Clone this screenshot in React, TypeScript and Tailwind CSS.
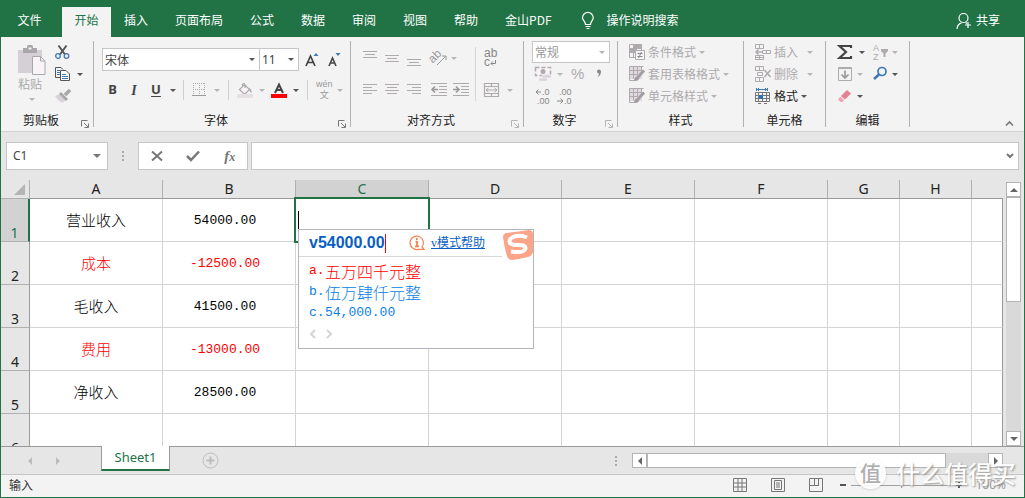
import React, { type ReactNode } from 'react';
import { clsx } from 'clsx';

const menuTabs = ['插入', '页面布局', '公式', '数据', '审阅', '视图', '帮助', '金山PDF'];

const columns = ['A', 'B', 'C', 'D', 'E', 'F', 'G', 'H', ''];

const rows = [
  { label: '营业收入', value: '54000.00', negative: false },
  { label: '成本', value: '-12500.00', negative: true },
  { label: '毛收入', value: '41500.00', negative: false },
  { label: '费用', value: '-13000.00', negative: true },
  { label: '净收入', value: '28500.00', negative: false },
  { label: '', value: '', negative: false },
];

const candidates = [
  { key: 'a.', text: '五万四千元整', numeric: false },
  { key: 'b.', text: '伍万肆仟元整', numeric: false },
  { key: 'c.', text: '54,000.00', numeric: true },
];

function Icon({ w = 16, h = 16, className, children }: { w?: number; h?: number; className?: string; children: ReactNode }) {
  return (
    <svg
      width={w}
      height={h}
      viewBox={`0 0 ${w} ${h}`}
      fill="none"
      stroke="currentColor"
      aria-hidden="true"
      className={clsx('block shrink-0 overflow-visible', className)}
    >
      {children}
    </svg>
  );
}

function Caret({ dim, className }: { dim?: boolean; className?: string }) {
  return (
    <Icon w={6} h={3} className={clsx(dim ? 'text-[#b5b5b5]' : 'text-[#555]', className)}>
      <path d="M0 0h6L3 3z" fill="currentColor" stroke="none" />
    </Icon>
  );
}

function Glyphs({ x, y, size = 9, children }: { x: number; y: number; size?: number; children: string }) {
  return (
    <text x={x} y={y} fill="currentColor" stroke="none" fontSize={size} fontFamily="Liberation Sans">
      {children}
    </text>
  );
}

function Tool({ label, dim, className, children }: { label: string; dim?: boolean; className?: string; children: ReactNode }) {
  return (
    <button
      type="button"
      aria-label={label}
      className={clsx('flex h-[22px] shrink-0 items-center', dim ? 'text-[#aeaaae]' : 'text-[#444]', className)}
    >
      {children}
    </button>
  );
}

function Group({ title, width, className, launcher, launcherDim, children }: {
  title: string;
  width: string;
  className?: string;
  launcher?: boolean;
  launcherDim?: boolean;
  children: ReactNode;
}) {
  return (
    <section className={clsx('flex h-[86px] shrink-0 flex-col border-r border-[#b1b1b1]', width)}>
      <div className={clsx('h-[72px]', className)}>{children}</div>
      <div className="flex h-[14px] items-center leading-[14px]">
        <span className="flex-1 text-center text-[#222]">{title}</span>
        {launcher && (
          <button
            type="button"
            aria-label={`${title}设置`}
            className={clsx('mt-2 mr-1', launcherDim ? 'text-[#b5b5b5]' : 'text-[#777]')}
          >
            <Icon w={8} h={8}>
              <path d="M.5 6.5V.5H6.5M3 3l4 4M7.5 3.5v4h-4" />
            </Icon>
          </button>
        )}
      </div>
    </section>
  );
}

function VLine({ className }: { className: string }) {
  return <span className={clsx('w-px shrink-0 bg-[#cfcfcf]', className)} />;
}

function Lines({ d }: { d: string }) {
  return (
    <Icon w={14} h={18}>
      <path d={d} />
    </Icon>
  );
}

function MenuBar() {
  return (
    <nav className="flex h-[37px] items-end bg-[#217346] text-white">
      <button type="button" className="h-[30px] w-[61px] pr-1 pb-1">文件</button>
      <button type="button" className="h-[30px] w-[49px] bg-[#f3f3f3] pb-1 text-[#217346]">开始</button>
      <div className="flex h-[30px] gap-px pb-1">
        {menuTabs.map((tab) => (
          <button key={tab} type="button" className="px-[13px] whitespace-nowrap">{tab}</button>
        ))}
      </div>
      <button type="button" className="ml-4 flex h-[30px] items-center gap-3 pb-1">
        <Icon w={14} h={18}>
          <path d="M4.500 13.500C4.500 10.500 1.500 9.500 1.500 6.800A5.300 5.300 0 0 1 12.200 6.800C12.200 9.500 9.500 10.500 9.500 13.500zM4.500 15.500h5M5.500 17.500h3" strokeWidth="1.200" />
        </Icon>
        操作说明搜索
      </button>
      <button type="button" className="mr-6 ml-auto flex h-[30px] items-center gap-1 pb-1">
        <Icon w={16} h={18}>
          <circle cx="7.500" cy="7" r="4.500" strokeWidth="1.200" />
          <path d="M1 18c.3-4 2-5.500 4.500-6.200M9.500 11.500l1.500 1M12 11v6M9 14h6" strokeWidth="1.200" />
        </Icon>
        共享
      </button>
    </nav>
  );
}

function ClipboardGroup() {
  return (
    <Group title="剪贴板" width="w-[93px]" launcher>
      <div className="flex">
        <button type="button" className="ml-4 flex w-[30px] flex-col items-center pt-1 text-[#aaa]">
          <Icon w={28} h={30}>
            <path d="M0 5h24v23H0z" fill="#d5d0d5" stroke="none" />
            <path d="M5 8V3h4V1.500Q9 0 10.500 0h3Q15 0 15 1.500V3h4v5z" fill="#aaa7aa" stroke="none" />
            <path d="M10.500 3.500h3" stroke="#f3f3f3" strokeWidth="2" />
            <path d="M14.500 11.500h8l4.500 4.500v13.500H14.500z" fill="#f8f4f8" stroke="#aaa7aa" />
            <path d="M22.500 11.500V16H27" stroke="#aaa7aa" />
          </Icon>
          <span className="mt-px pr-1 leading-4">粘贴</span>
          <Caret dim className="mt-1.5" />
        </button>
        <div className="ml-2">
          <Tool label="剪切">
            <Icon>
              <path d="M3.500 1.500l6.500 9M11.500 1.500l-6.500 9" strokeWidth="2" stroke="#555" />
              <circle cx="3" cy="12" r="2.300" stroke="#3e79b4" strokeWidth="1.300" />
              <circle cx="11.500" cy="12" r="2.300" stroke="#3e79b4" strokeWidth="1.300" />
            </Icon>
          </Tool>
          <Tool label="复制" className="gap-1.5">
            <Icon>
              <path d="M6 11.500H.5V1.500h5.500l2 2" stroke="#555" />
              <path d="M5.500 4.500h5.500l3.500 3.500v6.500H5.500z" fill="#fff" stroke="#555" />
              <path d="M2 4.500h3M2 6.500h3M2 8.500h3M7 8.500h4M7 10.500h6M7 12.500h6" stroke="#3e79b4" />
            </Icon>
            <Caret />
          </Tool>
          <Tool label="格式刷" dim>
            <Icon>
              <path d="M0 8l5-2 6 6-4 3q-4-2-7-7z" fill="#d8d3d8" stroke="none" />
              <path d="M6 4l7 7-2 2-7-7z" fill="#aaa7aa" stroke="none" />
              <path d="M10 7l5-5" strokeWidth="3.500" stroke="#aaa7aa" />
            </Icon>
          </Tool>
        </div>
      </div>
    </Group>
  );
}

function FontGroup() {
  return (
    <Group title="字体" width="w-[257px]" className="pl-2" launcher>
      <div className="flex items-center pt-[7px]">
        <label className="flex h-[23px] w-[158px] items-center border border-[#c6c6c6] bg-white pr-1">
          <select aria-label="字体" defaultValue="宋体" className="min-w-0 flex-1 appearance-none pl-0.5 text-[#444] outline-none">
            <option>宋体</option>
          </select>
          <Caret />
        </label>
        <label className="-ml-px flex h-[23px] w-10 items-center border border-[#c6c6c6] bg-white pr-1">
          <select aria-label="字号" defaultValue="11" className="min-w-0 flex-1 appearance-none pl-0.5 font-['Noto_Sans'] text-[12px] text-[#444] outline-none">
            <option>11</option>
          </select>
          <Caret />
        </label>
        <Tool label="增大字号" className="ml-1.5 w-[23px]">
          <Icon w={14}>
            <path d="M1 14L5.500 4L10 14M2.500 10.500h6" strokeWidth="1.700" />
            <path d="M8.500 4l2.500-3L13.500 4z" fill="#3e79b4" stroke="none" />
          </Icon>
        </Tool>
        <Tool label="减小字号">
          <Icon w={14}>
            <path d="M1 14L4.500 6L8 14M2 11h5" strokeWidth="1.600" />
            <path d="M7.500 1h5L10 4z" fill="#3e79b4" stroke="none" />
          </Icon>
        </Tool>
      </div>
      <div className="flex items-center pt-2 font-['Noto_Sans']">
        <Tool label="加粗" className="w-[21px] justify-center text-[13px] font-bold">B</Tool>
        <Tool label="倾斜" className="w-[22px] justify-center font-['Liberation_Serif'] text-[14px] font-bold italic">I</Tool>
        <Tool label="下划线" className="w-[22px] justify-center text-[13px] font-bold underline underline-offset-2">U</Tool>
        <Tool label="下划线样式" className="w-3 justify-center"><Caret /></Tool>
        <VLine className="ml-1 h-[20px]" />
        <Tool label="边框" dim className="ml-2 gap-2">
          <Icon w={14}>
            <path d="M1.500 1v11M7.500 1v11M12.500 1v11M1 1.500h12M1 7.500h12" strokeDasharray="1 1" />
            <path d="M0 13.500h14" stroke="#999" />
          </Icon>
          <Caret dim />
        </Tool>
        <VLine className="mx-2 h-[20px]" />
        <Tool label="填充颜色" dim className="gap-1.5">
          <Icon>
            <path d="M2.500 7.500l5-5 5 5-5 5zM5.500 5V2.500Q6.500.5 8 2.500V6" fill="#f7f3f7" strokeWidth="1.200" />
            <path d="M12 6q3 1 2.500 5q-2-.5-2.500-5z" fill="currentColor" stroke="none" />
            <path d="M0 12h16v4H0z" fill="#e6dfe4" stroke="none" />
          </Icon>
          <Caret dim />
        </Tool>
        <Tool label="字体颜色" className="ml-1.5 gap-1.5">
          <Icon>
            <path d="M4 11L8 2.500L12 11M5.500 8h5" strokeWidth="2" />
            <path d="M0 12h16v4H0z" fill="#f00" stroke="none" />
          </Icon>
          <Caret />
        </Tool>
        <VLine className="mx-2 h-[20px]" />
        <Tool label="拼音指南" dim className="gap-1">
          <span className="flex flex-col items-center text-[#999]">
            <span className="font-['Liberation_Sans'] text-[9px] leading-[10px]">wén</span>
            <span className="font-['Noto_Sans_CJK_SC'] text-[9px] leading-[12px]">文</span>
          </span>
          <Caret dim />
        </Tool>
      </div>
    </Group>
  );
}

function AlignGroup() {
  return (
    <Group title="对齐方式" width="w-[173px]" className="pl-3" launcher launcherDim>
      <div className="flex pt-1.5">
        <div className="w-[113px] border-r border-[#d6d6d6]">
          <div className="flex h-[22px] gap-2">
            <Tool label="顶端对齐" dim><Lines d="M0 2.500h14M2 5.500h10M0 8.500h14" /></Tool>
            <Tool label="垂直居中" dim><Lines d="M0 6.500h14M2 9.500h10M0 12.500h14" /></Tool>
            <Tool label="底端对齐" dim><Lines d="M0 10.500h14M2 13.500h10M0 16.500h14" /></Tool>
            <Tool label="方向" dim className="ml-0.5 gap-1">
              <Icon className="text-[#999]">
                <g transform="rotate(-45 6 8)"><Glyphs x={-1} y={9} size={12}>ab</Glyphs></g>
                <path d="M6 15l9-9M11 6h4v4" />
              </Icon>
              <Caret dim />
            </Tool>
          </div>
          <div className="mt-2.5 flex h-[22px] gap-2">
            <Tool label="左对齐" dim><Lines d="M0 3.500h14M0 6.500h9M0 9.500h14M0 12.500h9" /></Tool>
            <Tool label="居中" dim><Lines d="M0 3.500h14M2 6.500h10M0 9.500h14M2 12.500h10" /></Tool>
            <Tool label="右对齐" dim><Lines d="M0 3.500h14M5 6.500h9M0 9.500h14M5 12.500h9" /></Tool>
            <Tool label="减少缩进量" dim className="ml-0.5">
              <Icon>
                <path d="M0 1.500h16M8 4.500h8M8 7.500h8M8 10.500h8M0 13.500h16" />
                <path d="M7 7.500H1M4 4.500l-3 3 3 3" strokeWidth="1.600" stroke="#999" />
              </Icon>
            </Tool>
            <Tool label="增加缩进量" dim className="-ml-0.5">
              <Icon>
                <path d="M0 1.500h16M8 4.500h8M8 7.500h8M8 10.500h8M0 13.500h16" />
                <path d="M0 7.500h6M3 4.500l3 3-3 3" strokeWidth="1.600" stroke="#999" />
              </Icon>
            </Tool>
          </div>
        </div>
        <div className="ml-2">
          <Tool label="自动换行" dim>
            <span className="flex flex-col font-['Liberation_Sans'] text-[12px] text-[#888]">
              <span className="leading-[9px]">ab</span>
              <span className="flex leading-[9px]">
                c
                <Icon w={7} h={9}><path d="M5.500 2v3.500H1M3 3.500L1 5.500l2 2" /></Icon>
              </span>
            </span>
          </Tool>
          <Tool label="合并后居中" dim className="mt-2.5 gap-2">
            <Icon w={15}>
              <path d="M.5 1.500h14v13H.5zM.5 4.500h14M.5 11.500h14M7.500 1.500v3M7.500 11.500v3" strokeWidth="1.200" />
              <path d="M2 8h11M4.500 6L2 8l2.500 2M10.500 6L13 8l-2.500 2" />
            </Icon>
            <Caret dim />
          </Tool>
        </div>
      </div>
    </Group>
  );
}

function NumberGroup() {
  return (
    <Group title="数字" width="w-[94px]" className="pl-2" launcher launcherDim>
      <label className="flex h-[22px] w-[78px] items-center border border-[#c6c6c6] bg-white pr-1">
        <select aria-label="数字格式" defaultValue="常规" className="min-w-0 flex-1 appearance-none pl-0.5 text-[#999] outline-none">
          <option>常规</option>
        </select>
        <Caret dim />
      </label>
      <div className="flex pl-[3px]">
        <Tool label="会计数字格式" dim className="gap-1.5">
          <Icon>
            <path d="M.5 1.500h15v8H.5z" fill="#f7f3f7" strokeWidth="1.500" strokeDasharray="4 2" />
            <circle cx="8" cy="5.500" r="2.500" fill="currentColor" stroke="none" />
            <path d="M7 9h9v3H7zM4 12h8v3H4z" fill="#d8d3d8" stroke="#f3f3f3" strokeWidth=".5" />
          </Icon>
          <Caret dim />
        </Tool>
        <Tool label="百分比样式" dim className="ml-2 font-['Liberation_Sans'] text-[15px] text-[#888]">%</Tool>
        <Tool label="千位分隔样式" dim className="ml-3">
          <Icon w={6} h={10}>
            <path d="M1 2.500q0-2 2-2t2 2q0 4-3.500 5.500q1.500-2 1.500-3.500-2 0-2-2z" fill="#888" stroke="none" />
          </Icon>
        </Tool>
      </div>
      <div className="flex gap-1.5 pl-[3px]">
        <Tool label="增加小数位数" dim>
          <Icon h={20} className="text-[#888]">
            <Glyphs x={7} y={9}>.0</Glyphs>
            <Glyphs x={2} y={18}>.00</Glyphs>
            <path d="M1 6h5M3.500 3.500L1 6l2.500 2.500" />
          </Icon>
        </Tool>
        <Tool label="减少小数位数" dim>
          <Icon h={20} className="text-[#888]">
            <Glyphs x={2} y={9}>.00</Glyphs>
            <Glyphs x={7} y={18}>.0</Glyphs>
            <path d="M0 15h6M3.500 12.500L6 15l-2.500 2.500" />
          </Icon>
        </Tool>
      </div>
    </Group>
  );
}

function TableBrushIcon() {
  return (
    <Icon>
      <path d="M1 1h12v12H1z" fill="#e0dae0" stroke="none" />
      <path d="M.5.5h14M.5.5v14H6M.5 4.500h14M.5 8.500h8M4.500.5v12M8.500.5v8M12.500.5v4" />
      <path d="M15 4.500L9 11" strokeWidth="3" stroke="#a29ea2" />
      <path d="M5 15q0-4 3.500-5l2 2q-1 3.500-5.500 3z" fill="#a29ea2" stroke="none" />
    </Icon>
  );
}

function StyleGroup() {
  return (
    <Group title="样式" width="w-[126px]" className="pl-[11px]">
      <Tool label="条件格式" dim className="gap-[3px]">
        <Icon>
          <path d="M.5.5h12v13H.5zM.5 4.500h12M.5 8.500h6M4.500.5v13" />
          <path d="M5 0h8v4H5zM1 5h7v3H1z" fill="currentColor" stroke="none" />
          <path d="M6.500 6.500h9v9h-9z" fill="#f8f5f8" />
          <path d="M8.500 9.500h5M8.500 12.500h5M12.500 8l-3 6" stroke="#888" />
        </Icon>
        <span>条件格式</span>
        <Caret dim />
      </Tool>
      <Tool label="套用表格格式" dim className="gap-[3px]"><TableBrushIcon /><span>套用表格格式</span><Caret dim /></Tool>
      <Tool label="单元格样式" dim className="gap-[3px]"><TableBrushIcon /><span>单元格样式</span><Caret dim /></Tool>
    </Group>
  );
}

function CellsGroup() {
  return (
    <Group title="单元格" width="w-[82px]" className="pl-[11px]">
      <Tool label="插入" dim className="gap-[3px]">
        <Icon>
          <path d="M.5 .5h8v4h-8zM4.500.5v4M.5 11.500h8v4h-8zM4.500 11.500v4M.5 13.500h8M7.500 6.500h8v3h-8zM11.500 6.500v3" />
          <path d="M7 8H1M3.500 5.500L1 8l2.500 2.500" strokeWidth="1.500" />
        </Icon>
        <span>插入</span>
        <Caret dim className="ml-1.5" />
      </Tool>
      <Tool label="删除" dim className="gap-[3px]">
        <Icon>
          <path d="M.5 .5h8v4h-8zM4.500.5v4M.5 11.500h8v4h-8zM4.500 11.500v4M2.500 6.500h5v3h-5z" />
          <path d="M9.500 4l6 7M15.500 4l-6 7" strokeWidth="1.500" />
        </Icon>
        <span>删除</span>
        <Caret dim className="ml-1.5" />
      </Tool>
      <Tool label="格式" className="gap-[3px]">
        <Icon>
          <path d="M1.500 0v3M12.500 0v3M2 1.500h10M4 0L2.500 1.500L4 3M10 0l1.500 1.500L10 3" stroke="#3e79b4" />
          <path d="M.5 4.500h14v9H.5zM.5 7.500h14M.5 10.500h14M3.500 4.500v9M7.500 4.500v9M11.500 4.500v9M3 15.500h3M9 15.500h3" stroke="#777" />
          <path d="M4 7h4v4H4z" fill="#2c72b8" stroke="none" />
        </Icon>
        <span className="text-[#222]">格式</span>
        <Caret />
      </Tool>
    </Group>
  );
}

function EditGroup() {
  return (
    <Group title="编辑" width="w-[84px]" className="pl-[11px]">
      <div className="flex">
        <Tool label="自动求和" className="w-9 gap-1.5">
          <Icon>
            <path d="M14 4V2H2.500L9 8L2.500 14H14v-2" strokeWidth="2.200" />
          </Icon>
          <Caret />
        </Tool>
        <Tool label="排序和筛选" dim className="gap-0.5">
          <Icon w={17} h={20}>
            <Glyphs x={0} y={9}>A</Glyphs>
            <Glyphs x={0} y={18}>Z</Glyphs>
            <path d="M8 7h7v2l-2.500 2.500V15h-2v-3.500L8 9z" fill="currentColor" stroke="none" />
          </Icon>
          <Caret dim />
        </Tool>
      </div>
      <div className="flex">
        <Tool label="填充" dim className="w-9 gap-1">
          <Icon>
            <path d="M1.500 1.500h13v13h-13zM1 2.500h14" />
            <path d="M8 4.500v7.500M4.500 8.500L8 12l3.500-3.500" strokeWidth="1.700" stroke="#999" />
          </Icon>
          <Caret dim />
        </Tool>
        <Tool label="查找和选择" className="gap-1">
          <Icon w={15}>
            <circle cx="9" cy="5.500" r="4" stroke="#3e79b4" strokeWidth="1.700" />
            <path d="M6 8.500L1 13" stroke="#3e79b4" strokeWidth="2.500" />
          </Icon>
          <Caret />
        </Tool>
      </div>
      <Tool label="清除" className="gap-1">
        <Icon>
          <path d="M10 2l4 3.500-6 6L4 8z" fill="#e57f92" stroke="none" />
          <path d="M3.200 8.800l4 3.500-2 1.700H3.500L1 11.500z" fill="#efa5b3" stroke="none" />
        </Icon>
        <Caret />
      </Tool>
    </Group>
  );
}

function FormulaBar() {
  return (
    <div className="flex h-12 items-start px-[5px] pt-[10px]">
      <label className="flex h-7 w-[102px] shrink-0 items-center border border-[#c6c6c6] bg-white pr-1.5">
        <input aria-label="名称框" defaultValue="C1" className="min-w-0 flex-1 pl-1.5 font-['Noto_Sans'] text-[12px] text-[#444] outline-none" />
        <Icon w={8} h={4} className="text-[#777]"><path d="M0 0h8L4 4z" fill="currentColor" stroke="none" /></Icon>
      </label>
      <div className="flex h-7 w-[30px] shrink-0 items-center justify-center text-[#aaa]">
        <Icon w={2} h={10}><path d="M1 0v10" strokeWidth="2" strokeDasharray="2 2" /></Icon>
      </div>
      <div className="flex h-7 w-[110px] shrink-0 items-center justify-around border border-[#c6c6c6] bg-white text-[#777]">
        <button type="button" aria-label="取消">
          <Icon w={12} h={12}><path d="M1 1.500l10 9M11 1.500l-10 9" strokeWidth="2" /></Icon>
        </button>
        <button type="button" aria-label="输入">
          <Icon w={14} h={12}><path d="M1 6l4 4 8-8.500" strokeWidth="2.500" /></Icon>
        </button>
        <button type="button" aria-label="插入函数" className="font-['Liberation_Serif'] text-[15px] leading-4 font-bold italic">
          f<span className="text-[12px]">x</span>
        </button>
      </div>
      <label className="ml-[3px] flex h-7 min-w-0 flex-1 items-center border border-[#c6c6c6] bg-white pr-1">
        <input aria-label="编辑栏" className="min-w-0 flex-1 px-2 outline-none" />
        <Icon w={8} h={6} className="text-[#777]"><path d="M1 1l3 3 3-3" strokeWidth="2" /></Icon>
      </label>
    </div>
  );
}

function ImePopup() {
  return (
    <div className="absolute top-[30px] left-0.5 z-10 h-[120px] w-[236px] border border-[#b4b4bc] bg-white text-left">
      <div className="flex h-[27px] items-start">
        <div className="flex h-[27px] w-[203px] items-center border-b border-[#d8d8d8] pl-2.5">
          <span className="font-['Liberation_Sans'] text-[16px] font-bold text-[#0a5fc4]">v54000.00</span>
          <span className="h-[19px] w-px shrink-0 bg-[#f00]" />
          <Icon className="ml-auto text-[#f5804f]">
            <path d="M13 12A6.700 6.700 0 1 0 9.500 14.300H15L13 12z" strokeWidth="1.200" />
            <path d="M7.800 3v2M6.500 6.700h1.500V11M6 11.300h4" strokeWidth="1.800" />
          </Icon>
          <a href="#help" className="mr-[17px] ml-1.5 font-['Liberation_Serif','Noto_Sans_CJK_SC',sans-serif] text-[12px] leading-4 text-[#0a5fc4] underline">
            v模式帮助
          </a>
        </div>
        <svg width="31" height="31" viewBox="0 0 31 31" className="block shrink-0" role="img" aria-label="搜狗">
          <path d="M4 3Q16 2 27 0Q30 0 31 3V22Q30 26 26 27Q18 29 10 30Q6 30 5 26Q2 16 1 7Q1 4 4 3z" fill="#fba487" />
          <path d="M25 7.500Q18 4.500 11 7Q6.500 9 8 13Q10 15.500 17 15Q24 15 23.500 18.500Q22 23.500 9 21.500" fill="none" stroke="#fff" strokeWidth="4" />
        </svg>
      </div>
      <ol className="pt-[3px] pl-2.5">
        {candidates.map((item, index) => (
          <li key={item.key} className={clsx("flex h-[21px] items-center font-['Liberation_Mono'] text-[13px]", index === 0 ? 'text-[#f00]' : 'text-[#0a80e6]')}>
            <span className="w-4">{item.key}</span>
            <span className={item.numeric ? '' : "font-['Noto_Sans_CJK_SC'] text-[16px] font-light"}>{item.text}</span>
          </li>
        ))}
      </ol>
      <div className="flex gap-2 pt-1.5 pl-2.5 text-[#d4d4d4]">
        <button type="button" aria-label="上一页"><Icon w={8} h={10}><path d="M6 1L2 5l4 4" strokeWidth="2" /></Icon></button>
        <button type="button" aria-label="下一页"><Icon w={8} h={10}><path d="M2 1l4 4-4 4" strokeWidth="2" /></Icon></button>
      </div>
    </div>
  );
}

function Sheet() {
  return (
    <div className="min-w-0 flex-1 overflow-hidden">
      <table className="w-full table-fixed border-separate border-spacing-0 bg-white">
        <colgroup>
          <col className="w-[29px]" />
          {columns.map((name, index) => (
            <col key={index} className={name === '' ? '' : index > 5 ? 'w-[72px]' : 'w-[133px]'} />
          ))}
        </colgroup>
        <thead>
          <tr className="h-[19px] bg-[#e6e6e6] font-['Noto_Sans'] text-[14px] leading-[18px] text-[#222]">
            <th aria-label="全选" className="border-r border-b border-[#b0b0b0] p-0">
              <Icon w={11} h={11} className="mr-1 ml-auto text-[#b4b4b4]"><path d="M11 0v11H0z" fill="currentColor" stroke="none" /></Icon>
            </th>
            {columns.map((name, index) => (
              <th
                key={index}
                scope="col"
                className={clsx(
                  'border-b border-b-[#999] p-0 font-normal',
                  index < 8 && 'border-r border-r-[#b0b0b0]',
                  name === 'C' && 'bg-[#d2d2d2] text-[#217346]',
                )}
              >
                {name}
              </th>
            ))}
          </tr>
        </thead>
        <tbody>
          {rows.map((row, index) => (
            <tr key={index} className="h-[43px]">
              <th
                scope="row"
                className={clsx(
                  "border-b border-b-[#b0b0b0] p-0 align-bottom font-['Noto_Sans'] text-[14px] leading-4 font-normal",
                  index === 0 ? 'border-r-2 border-r-[#217346] bg-[#d2d2d2] text-[#217346]' : 'border-r border-r-[#999] bg-[#e6e6e6] text-[#222]',
                )}
              >
                {index + 1}
              </th>
              {columns.map((name, col) => (
                <td
                  key={col}
                  className={clsx(
                    'border-b border-[#d4d4d4] text-center',
                    col === 8 ? 'border-r border-r-[#999]' : 'border-r',
                    row.negative ? 'text-[#f00]' : 'text-black',
                    name === 'A' && 'text-[15px] font-light',
                    name === 'B' ? "pt-0.5 pr-2 font-['Liberation_Mono'] text-[13px]" : 'p-0',
                    name === 'C' && index === 0 && 'relative',
                  )}
                >
                  {name === 'A' && row.label}
                  {name === 'B' && row.value}
                  {name === 'C' && index === 0 && (
                    <>
                      <div className="absolute -inset-0.5 border-2 border-[#217346]">
                        <span className="mt-3 ml-0.5 block h-5 w-px bg-black" />
                      </div>
                      <ImePopup />
                    </>
                  )}
                </td>
              ))}
            </tr>
          ))}
        </tbody>
      </table>
    </div>
  );
}

function ScrollButton({ label, d, className }: { label: string; d: string; className?: string }) {
  return (
    <button type="button" aria-label={label} className={clsx('flex size-[15px] shrink-0 items-center justify-center border border-[#b4b4b4] bg-white text-[#666]', className)}>
      <Icon w={8} h={8}><path d={d} fill="currentColor" stroke="none" /></Icon>
    </button>
  );
}

function SheetBar() {
  return (
    <div className="flex h-[29px] shrink-0 items-start border-b border-[#c6c6c6]">
      <div className="flex h-[28px] w-[100px] items-center gap-[22px] border-t border-[#999] pl-[26px] text-[#bbb]">
        <button type="button" aria-label="上一个工作表"><Icon w={6} h={8}><path d="M5 0v8L1 4z" fill="currentColor" stroke="none" /></Icon></button>
        <button type="button" aria-label="下一个工作表"><Icon w={6} h={8}><path d="M1 0v8l4-4z" fill="currentColor" stroke="none" /></Icon></button>
      </div>
      <button type="button" className="h-[25px] w-[69px] border-x border-b-2 border-x-[#999] border-b-[#217346] bg-white font-['Noto_Sans'] text-[13px] text-[#217346]">
        Sheet1
      </button>
      <div className="flex h-[28px] min-w-0 flex-1 items-center border-t border-[#999]">
        <button type="button" aria-label="新工作表" className="ml-8 text-[#bdbdbd]">
          <Icon w={17} h={17}>
            <circle cx="8.500" cy="8.500" r="7.500" />
            <path d="M8.500 4.500v8M4.500 8.500h8" strokeWidth="2" />
          </Icon>
        </button>
        <Icon w={2} h={10} className="ml-auto text-[#aaa]"><path d="M1 0v10" strokeWidth="2" strokeDasharray="2 2" /></Icon>
        <div className="ml-[15px] flex h-[15px] w-[371px] bg-[#d9d9d9]">
          <ScrollButton label="向左滚动" d="M6 0v8L2 4z" />
          <div className="w-[299px] border border-[#b4b4b4] bg-white" />
          <ScrollButton label="向右滚动" d="M2 0v8l4-4z" className="ml-auto" />
        </div>
        <div className="w-[21px] shrink-0" />
      </div>
    </div>
  );
}

function StatusBar() {
  return (
    <footer className="flex h-[22px] shrink-0 items-center bg-[#f3f3f3] pr-[18px] pb-0.5 pl-2 text-[#333]">
      <span>输入</span>
      <div className="ml-auto flex gap-6 text-[#777]">
        <button type="button" aria-label="普通"><Icon w={14} h={14}><path d="M.5.5h13v13H.5zM.5 5h13M.5 9h13M5 .5v13M9 .5v13" /></Icon></button>
        <button type="button" aria-label="页面布局"><Icon w={14} h={14}><path d="M.5.5h13v13H.5zM3.500 2.500h7v9h-7zM5 5h4M5 7h4M5 9h4" /></Icon></button>
        <button type="button" aria-label="分页预览"><Icon w={14} h={14}><path d="M.5.5h13v13H.5zM5.500.5v7M9.500.5v7M1 7.500h9" /></Icon></button>
      </div>
      <button type="button" aria-label="缩小" className="ml-4 text-[#555]"><Icon w={8} h={8}><path d="M1 4h6" strokeWidth="2" /></Icon></button>
      <input
        type="range"
        aria-label="显示比例"
        defaultValue={50}
        className="mx-1 h-px w-[100px] appearance-none bg-[#a0a0a0] [&::-webkit-slider-thumb]:h-[5px] [&::-webkit-slider-thumb]:w-px [&::-webkit-slider-thumb]:appearance-none [&::-webkit-slider-thumb]:bg-[#a0a0a0]"
      />
      <button type="button" aria-label="放大" className="text-[#555]"><Icon w={8} h={8}><path d="M1 4h6M4 1v6" strokeWidth="2" /></Icon></button>
      <span className="ml-3 font-['Noto_Sans'] text-[12px] text-[#999]">100%</span>
    </footer>
  );
}

export default function App() {
  return (
    <div className="relative flex h-screen flex-col overflow-hidden border-x border-b border-[#217346] bg-[#e6e6e6] font-['Noto_Sans_CJK_SC',sans-serif] text-[12px]">
      <MenuBar />
      <div className="flex h-[95px] shrink-0 border-b border-[#d2d2d2] bg-[#f3f3f3] pt-1">
        <ClipboardGroup />
        <FontGroup />
        <AlignGroup />
        <NumberGroup />
        <StyleGroup />
        <CellsGroup />
        <EditGroup />
        <button type="button" aria-label="折叠功能区" className="mt-auto mr-2.5 mb-1 ml-auto text-[#777]">
          <Icon w={9} h={7}><path d="M1 5.500l3.500-3.500L8 5.500" strokeWidth="1.600" /></Icon>
        </button>
      </div>
      <FormulaBar />
      <div className="flex min-h-0 flex-1">
        <Sheet />
        <div className="flex w-[21px] shrink-0 flex-col pt-0.5 pl-[3px]">
          <div className="flex w-[15px] flex-1 flex-col bg-[#d9d9d9]">
            <ScrollButton label="向上滚动" d="M0 6h8L4 2z" />
            <div className="h-[105px] border border-[#b4b4b4] bg-white" />
            <ScrollButton label="向下滚动" d="M0 2h8L4 6z" className="mt-auto" />
          </div>
        </div>
      </div>
      <SheetBar />
      <StatusBar />
      <div className="pointer-events-none absolute right-2 bottom-2 flex items-center gap-2.5 opacity-90">
        <span className="flex size-[31px] items-center justify-center rounded-full bg-white text-[21px] font-medium text-[#aaa] shadow-sm">值</span>
        <span className="text-[24px] leading-8 font-medium text-white [text-shadow:1px_1px_2px_#888]">什么值得买</span>
      </div>
    </div>
  );
}
